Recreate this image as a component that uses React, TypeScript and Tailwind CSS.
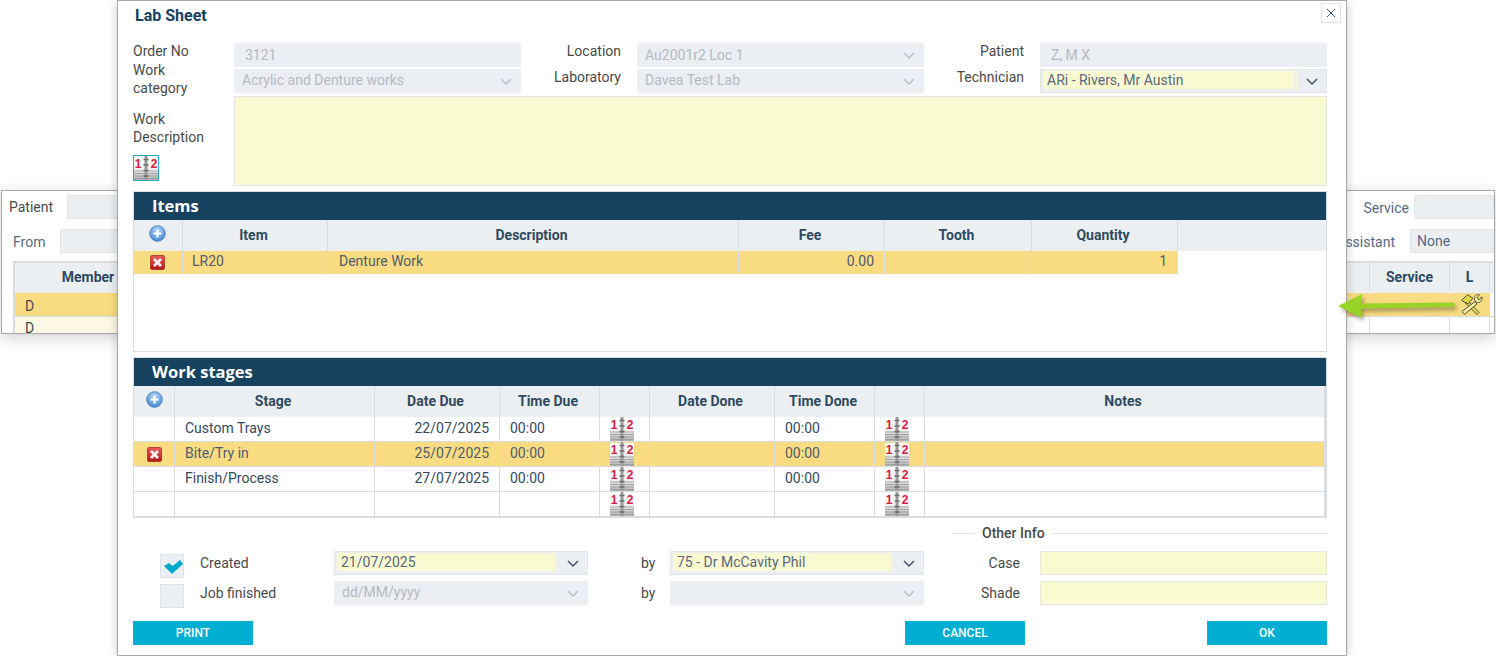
import type { ReactNode } from "react";

const LABEL = "text-[14px] leading-[18px] text-[#4a4a4a]";
const ITEM_COLS = "grid grid-cols-[49px_145px_411px_146px_147px_146px_1fr]";
const STAGE_COLS = "grid grid-cols-[41px_200px_125px_100px_50px_125px_100px_50px_1fr]";

const STAGES = [
  { stage: "Custom Trays", due: "22/07/2025", active: false },
  { stage: "Bite/Try in", due: "25/07/2025", active: true },
  { stage: "Finish/Process", due: "27/07/2025", active: false },
  { stage: "", due: "", active: false },
];

function Chevron({ dim }: { dim?: boolean }) {
  return (
    <svg width="12" height="7" viewBox="0 0 12 7" fill="none" stroke={dim ? "#b9c0ca" : "#44546a"} strokeWidth="1.5">
      <path d="M1 1l5 5 5-5" />
    </svg>
  );
}

function CalendarIcon() {
  return (
    <svg width="24" height="25" viewBox="0 0 24 25" className="block">
      <defs>
        <linearGradient id="page" x1="0" y1="0" x2="0" y2="1">
          <stop offset="0" stopColor="#fdfdfd" />
          <stop offset="0.55" stopColor="#eeeeee" />
          <stop offset="1" stopColor="#aaaaaa" />
        </linearGradient>
      </defs>
      <rect x="0" y="1" width="24" height="24" fill="url(#page)" />
      <path d="M0 15h24M0 17.5h24M0 20h24M0 22.5h24" stroke="#9c9c9c" strokeWidth="0.9" />
      <rect x="10.5" y="0" width="3" height="25" fill="#9a9a9a" />
      <path d="M9.5 3.5h5M9.5 9h5M9.5 14.5h5M9.5 20h5" stroke="#6e6e6e" strokeWidth="1.5" />
      <text x="4" y="11.5" textAnchor="middle" fontSize="12" fontWeight="700" fill="#d7203c" fontFamily="'Liberation Sans', sans-serif">1</text>
      <text x="20" y="11.5" textAnchor="middle" fontSize="12" fontWeight="700" fill="#d7203c" fontFamily="'Liberation Sans', sans-serif">2</text>
    </svg>
  );
}

function PlusIcon() {
  return (
    <svg width="17" height="17" viewBox="0 0 17 17" className="block">
      <defs>
        <radialGradient id="plusBlue" cx="0.5" cy="0.3" r="0.75">
          <stop offset="0" stopColor="#b4d8f6" />
          <stop offset="1" stopColor="#3b82cf" />
        </radialGradient>
      </defs>
      <circle cx="8.5" cy="8.5" r="7.8" fill="url(#plusBlue)" stroke="#3f79b8" strokeWidth="0.8" />
      <path d="M8.5 4.5v8M4.5 8.5h8" stroke="#fff" strokeWidth="2.2" />
    </svg>
  );
}

function RemoveIcon() {
  return (
    <svg width="15" height="15" viewBox="0 0 15 15" className="block">
      <defs>
        <linearGradient id="redBox" x1="0" y1="0" x2="0" y2="1">
          <stop offset="0" stopColor="#ea5a55" />
          <stop offset="1" stopColor="#b01a1a" />
        </linearGradient>
      </defs>
      <rect x="0.5" y="0.5" width="14" height="14" rx="1.5" fill="url(#redBox)" stroke="#a51f1f" strokeWidth="0.7" />
      <path d="M4 4l7 7M11 4l-7 7" stroke="#fdf1f1" strokeWidth="2.8" />
    </svg>
  );
}

function ToolsIcon() {
  return (
    <svg width="23" height="21" viewBox="0 0 23 21" className="block" strokeLinejoin="round">
      <path d="M8 7l11 11.5 -2 2 -11.5 -11.5z" fill="#e3de5c" stroke="#4c4c3c" strokeWidth="1" />
      <path d="M1.5 6.5L7.5 0.8l5.5 3.4-5 5.6z" fill="#dfda45" stroke="#4c4c3c" strokeWidth="1" />
      <path d="M15 7.5L2 17.5l2.6 2.8L17 10z" fill="#f4f0a0" stroke="#4c4c3c" strokeWidth="1" />
      <path d="M22 2.8l-3.2 3-2-1.8 2.6-3.2c-2.6-1-5.2 1-5 3.8 0 1.6.8 3 2.2 3.7 2.8 1.2 6-1.6 5.4-5.5z" fill="#f4f0a0" stroke="#4c4c3c" strokeWidth="1" />
    </svg>
  );
}

function ReadOnly({ value }: { value: string }) {
  return (
    <div className="h-6 bg-[#ebeef2] pl-[11px] text-[14px] leading-6 text-[#b7babf]">{value}</div>
  );
}

function DisabledSelect({ value, raised = true }: { value: string; raised?: boolean }) {
  return (
    <div className="flex h-6 items-center justify-between bg-[#ebeef2] pl-2 pr-[9px] text-[14px] text-[#b7babf]">
      <span className={raised ? "-mt-[2px]" : ""}>{value}</span>
      <Chevron dim />
    </div>
  );
}

function ActiveSelect({ value }: { value: string }) {
  return (
    <div className="flex h-6 items-stretch border border-[#e3e6e8] bg-[#ebeef2] py-[1px] pl-[2px] text-[14px] text-[#59687e]">
      <div className="mb-[2px] flex flex-1 items-center bg-[#f9f9d2] pl-1">{value}</div>
      <div className="ml-[2px] flex w-[30px] items-center justify-center border-l border-[#f9f9d2]">
        <Chevron />
      </div>
    </div>
  );
}

function RightLabel({ children }: { children: ReactNode }) {
  return <div className={`${LABEL} -mt-[1px] pr-4 text-right`}>{children}</div>;
}

function SectionHead({ title }: { title: string }) {
  return (
    <div className="h-7 bg-[#17425f] pl-[18px] font-['Open_Sans',sans-serif] text-[16.5px] font-bold leading-7 text-white">
      {title}
    </div>
  );
}

function HeadCell({ children }: { children?: ReactNode }) {
  return (
    <div className="flex items-center justify-center border-r border-[#d8dde1] pr-[3px] text-[14px] font-bold text-[#2f4a5e]">
      {children}
    </div>
  );
}

function Cell({ children, className = "" }: { children?: ReactNode; className?: string }) {
  return (
    <div className={`flex items-center overflow-hidden border-r border-[#d8dde1] text-[14px] ${className}`}>{children}</div>
  );
}

function Checkbox({ checked }: { checked?: boolean }) {
  return (
    <div className="flex h-6 w-6 items-end justify-end border border-[#dfe2e6] bg-[#ebeef2] pb-[3px]">
      {checked && (
        <svg width="19" height="14" viewBox="0 0 19 14" className="block">
          <path d="M0 6l5-3 3.5 3L16 0l3 4L8 14z" fill="#00a9cc" />
        </svg>
      )}
    </div>
  );
}

function BackgroundPanel() {
  return (
    <div className="mx-[1px] mt-[190px] h-[144px] overflow-hidden border border-[#a9a9a9] bg-white text-[14px] text-[#566b80] shadow-[0_4px_14px_rgba(0,0,0,0.18)]">
      <div className="flex h-[38px] items-start pt-1">
        <span className="ml-[7px] mt-[2px] text-[#4a4a4a]">Patient</span>
        <div className="ml-[14px] h-6 w-[60px] border border-[#e3e6e8] bg-[#ebeff2]" />
        <span className="ml-auto mt-[3px]">Service</span>
        <div className="ml-[5px] h-6 w-[80px] border border-[#e3e6e8] bg-[#ebeff2]" />
      </div>
      <div className="flex h-[32px] items-start">
        <span className="ml-[11px] mt-[3px]">From</span>
        <div className="ml-[15px] h-6 w-[60px] border border-[#e3e6e8] bg-[#ebeff2]" />
        <span className="ml-auto mt-[3px]">Assistant</span>
        <div className="ml-[15px] h-6 w-[84px] border border-[#e3e6e8] bg-[#ebeff2] pl-[6px] leading-[22px]">None</div>
      </div>
      <div className="ml-[11px] border-l-2 border-t-2 border-[#d8dde1]">
        <div className="flex h-[30px] bg-[#ebeff2] pb-[2px] font-bold text-[#2f4a5e]">
          <div className="flex w-[146px] items-center justify-center">Member</div>
          <div className="flex-1" />
          <div className="flex w-20 items-center justify-center border-l border-[#d8dde1]">Service</div>
          <div className="flex w-[41px] items-center justify-center border-x border-[#d8dde1]">L</div>
          <div className="w-[4px]" />
        </div>
        <div className="flex h-6 border-b border-[#d8dde1] text-[#4a4a4a]">
          <div className="w-[146px] bg-[#f9dc82] pl-[10px] leading-[26px]">D</div>
          <div className="flex-1 bg-[#f9dc82]" />
          <div className="w-20 bg-[#f9dc82]" />
          <div className="flex w-[41px] items-center justify-center bg-[#f9dc82] pl-1">
            <ToolsIcon />
          </div>
          <div className="w-[4px] bg-white" />
        </div>
        <div className="flex h-6 text-[#4a4a4a]">
          <div className="w-[146px] bg-[#fdf7e5] pl-[10px] leading-[22px]">D</div>
          <div className="flex-1" />
          <div className="w-20 border-l border-[#d8dde1]" />
          <div className="w-[41px] border-x border-[#d8dde1]" />
          <div className="w-[4px]" />
        </div>
      </div>
    </div>
  );
}

function GreenArrow() {
  return (
    <svg
      className="absolute left-[1330px] top-[288px] drop-shadow-[2px_3px_2px_rgba(0,0,0,0.35)]"
      width="130"
      height="36"
      viewBox="0 0 130 36"
    >
      <path d="M8 18L32 6l-1 9.5 92-1a2 2 0 0 1 0 4.5L31 20.5l1 9.5z" fill="#9ad327" />
    </svg>
  );
}

function Modal() {
  return (
    <div className="absolute left-[117px] top-0 h-[656px] w-[1230px] border border-[#a9a9a9] bg-white pl-[15px] pr-[19px] shadow-[0_2px_10px_rgba(0,0,0,0.2)]">
      <div className="h-[42px] pl-[2px] pt-[6px] text-[16px] font-bold leading-[18px] text-[#17425f]">Lab Sheet</div>
      <button className="absolute right-[5px] top-[2px] flex h-5 w-5 items-center justify-center border border-[#dfe2e6] bg-white">
        <svg width="10" height="10" viewBox="0 0 10 10" stroke="#44546a" strokeWidth="1" fill="none">
          <path d="M1 1l8 8M9 1l-8 8" />
        </svg>
      </button>

      <div className="grid grid-cols-[101px_287px_116px_287px_116px_287px] grid-rows-[24px_24px] gap-y-[2px]">
        <div className={`${LABEL} -mt-[1px]`}>Order No</div>
        <ReadOnly value="3121" />
        <RightLabel>Location</RightLabel>
        <DisabledSelect value="Au2001r2 Loc 1" raised={false} />
        <RightLabel>Patient</RightLabel>
        <ReadOnly value="Z, M X" />

        <div className={`${LABEL} -mt-[8px]`}>
          Work
          <br />
          category
        </div>
        <DisabledSelect value="Acrylic and Denture works" />
        <RightLabel>Laboratory</RightLabel>
        <DisabledSelect value="Davea Test Lab" />
        <RightLabel>Technician</RightLabel>
        <ActiveSelect value="ARi - Rivers, Mr Austin" />
      </div>

      <div className="mt-[3px] flex h-[90px]">
        <div className="w-[101px] pt-[14px]">
          <div className={LABEL}>
            Work
            <br />
            Description
          </div>
          <div className="mt-[9px] h-[26px] w-[26px] overflow-hidden border border-[#2ba9c9]">
            <CalendarIcon />
          </div>
        </div>
        <div className="flex-1 border border-[#e4e6e8] bg-[#f9f9d2]" />
      </div>

      <div className="mt-[5px] h-[161px] border border-[#d8dde1]">
        <SectionHead title="Items" />
        <div className="h-[131px]">
          <div className={`${ITEM_COLS} h-[31px] bg-[#ebeff2]`}>
            <HeadCell>
              <span className="-mt-[5px] ml-[2px]">
                <PlusIcon />
              </span>
            </HeadCell>
            <HeadCell>Item</HeadCell>
            <HeadCell>Description</HeadCell>
            <HeadCell>Fee</HeadCell>
            <HeadCell>Tooth</HeadCell>
            <HeadCell>Quantity</HeadCell>
          </div>
          <div className={`${ITEM_COLS} h-[23px] text-[#4f5d6e]`}>
            <Cell className="justify-center bg-[#f9dc82] pr-[2px]">
              <RemoveIcon />
            </Cell>
            <Cell className="bg-[#f9dc82] pb-[2px] pl-[9px]">LR20</Cell>
            <Cell className="bg-[#f9dc82] pb-[2px] pl-[11px]">Denture Work</Cell>
            <Cell className="justify-end bg-[#f9dc82] pb-[2px] pr-[10px]">0.00</Cell>
            <Cell className="bg-[#f9dc82]" />
            <Cell className="justify-end bg-[#f9dc82] pb-[2px] pr-[10px]">1</Cell>
          </div>
        </div>
      </div>

      <div className="mt-[5px] h-[161px] border border-[#d8dde1]">
        <SectionHead title="Work stages" />
        <div className="border-r border-[#d8dde1]">
          <div className={`${STAGE_COLS} h-[31px] bg-[#ebeff2]`}>
            <HeadCell>
              <span className="-mt-[4px] ml-[3px]">
                <PlusIcon />
              </span>
            </HeadCell>
            <HeadCell>Stage</HeadCell>
            <HeadCell>Date Due</HeadCell>
            <HeadCell>Time Due</HeadCell>
            <HeadCell />
            <HeadCell>Date Done</HeadCell>
            <HeadCell>Time Done</HeadCell>
            <HeadCell />
            <HeadCell>Notes</HeadCell>
          </div>
          {STAGES.map((row, i) => (
            <div
              key={i}
              className={`${STAGE_COLS} h-[25px] border-b border-[#d8dde1] ${row.active ? "bg-[#f9dc82] text-[#4f5d6e]" : "text-[#34495e]"}`}
            >
              <Cell className="justify-center">{row.active && <RemoveIcon />}</Cell>
              <Cell className="pb-[2px] pl-[10px]">{row.stage}</Cell>
              <Cell className="justify-end pb-[2px] pr-[10px]">{row.due}</Cell>
              <Cell className="pb-[2px] pl-[10px]">{row.stage && "00:00"}</Cell>
              <Cell className="pl-[10px]">
                <CalendarIcon />
              </Cell>
              <Cell />
              <Cell className="pb-[2px] pl-[10px]">{row.stage && "00:00"}</Cell>
              <Cell className="pl-[10px]">
                <CalendarIcon />
              </Cell>
              <Cell />
            </div>
          ))}
        </div>
      </div>

      <div className="ml-[820px] mt-[6px] flex h-[18px] items-center gap-2">
        <div className="h-px w-[21px] bg-[#dfe2e6]" />
        <span className="text-[14px] font-medium text-[#4a4a4a]">Other Info</span>
        <div className="h-px flex-1 bg-[#dfe2e6]" />
      </div>

      <div className="mt-[9px] grid grid-cols-[67px_134px_254px_82px_254px_116px_287px] grid-rows-[24px_24px] gap-y-[6px]">
        <div className="mt-[3px] pl-[27px]">
          <Checkbox checked />
        </div>
        <div className={`${LABEL} mt-[3px]`}>Created</div>
        <ActiveSelect value="21/07/2025" />
        <div className={`${LABEL} mt-[3px] pl-[53px]`}>by</div>
        <ActiveSelect value="75 - Dr McCavity Phil" />
        <div className={`${LABEL} mt-[3px] pr-5 text-right`}>Case</div>
        <div className="border border-[#e8e9dc] bg-[#f9f9d2]" />

        <div className="mt-[3px] pl-[27px]">
          <Checkbox />
        </div>
        <div className={`${LABEL} mt-[3px]`}>Job finished</div>
        <DisabledSelect value="dd/MM/yyyy" />
        <div className={`${LABEL} mt-[3px] pl-[53px]`}>by</div>
        <DisabledSelect value="" />
        <div className={`${LABEL} mt-[3px] pr-5 text-right`}>Shade</div>
        <div className="border border-[#e8e9dc] bg-[#f9f9d2]" />
      </div>

      <div className="mt-4 flex">
        <button className="h-6 w-[120px] bg-[#00aed1] text-[12px] font-medium text-white">PRINT</button>
        <button className="ml-[652px] h-6 w-[120px] bg-[#00aed1] text-[12px] font-medium text-white">CANCEL</button>
        <button className="ml-auto h-6 w-[120px] bg-[#00aed1] text-[12px] font-medium text-white">OK</button>
      </div>
    </div>
  );
}

export default function App() {
  return (
    <div className="relative h-[656px] w-[1496px] overflow-hidden bg-white font-['Roboto',sans-serif]">
      <BackgroundPanel />
      <Modal />
      <GreenArrow />
    </div>
  );
}
